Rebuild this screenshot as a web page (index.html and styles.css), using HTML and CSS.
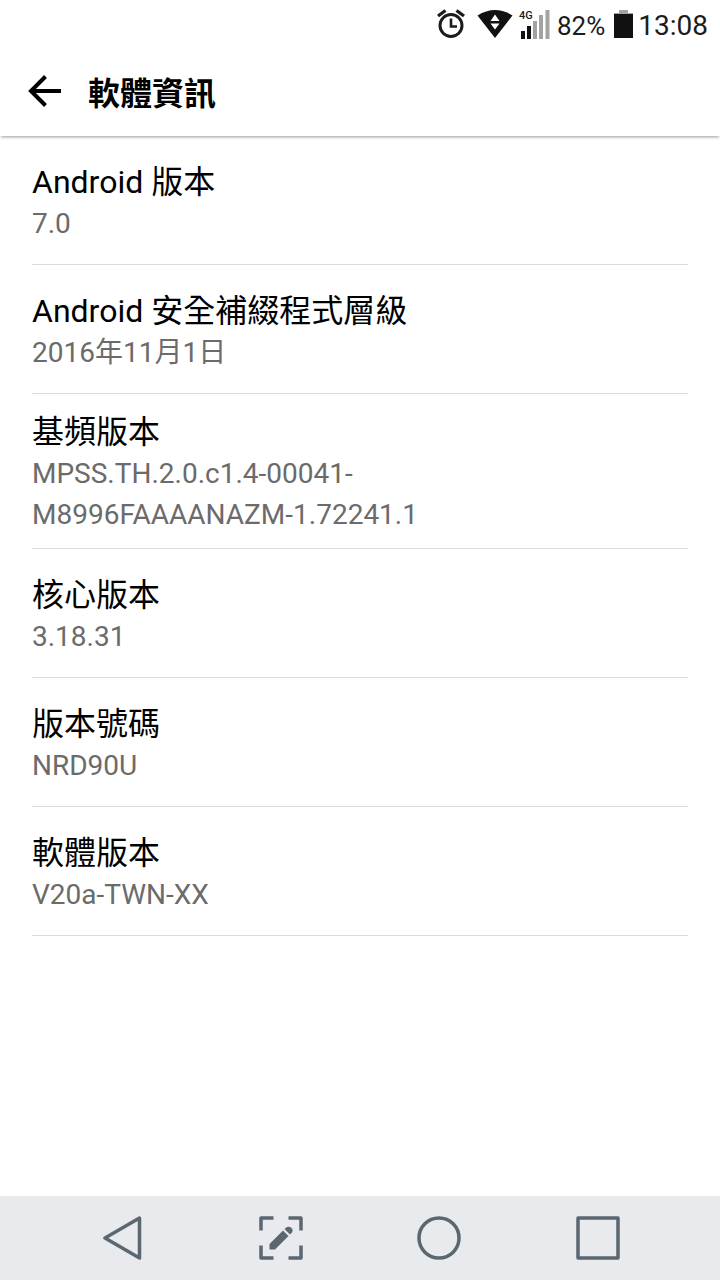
FILE: index.html
```html
<!DOCTYPE html>
<html lang="zh-Hant-TW">

<head>
    <meta charset="UTF-8">
    <meta name="viewport" content="width=device-width, initial-scale=1.0">
    <title>軟體資訊</title>
    <link rel="stylesheet" href="styles.css">
</head>

<body>
    <div class="status-bar">
        <svg class="alarm" width="28" height="30" viewBox="0 0 28 30" fill="none" stroke="#1c1c1c">
            <circle cx="14" cy="16.5" r="11" stroke-width="3" />
            <path d="M14 9.5V17.5H20" stroke-width="2.6" />
            <path d="M1 7L8.5 1.5M27 7L19.5 1.5" stroke-width="3.4" />
        </svg>
        <svg class="wifi" width="36" height="30" viewBox="0 0 36 30">
            <path d="M0.5 6.5Q18 -4.5 35.5 6.5L18 29Z" fill="#111" />
            <path d="M18 5.5L22.5 12H13.5ZM18 20.5L22.5 14.5H13.5Z" fill="#fff" />
        </svg>
        <div class="signal">
            <span class="network">4G</span>
            <svg width="29" height="29" viewBox="0 0 29 29">
                <path d="M0 21H4V29H0ZM6 16H10V29H6Z" fill="#111" />
                <path d="M12 11H16V29H12ZM18 5H22V29H18ZM24.5 0H28.5V29H24.5Z" fill="#a3a3a3" />
            </svg>
        </div>
        <span class="percent">82%</span>
        <svg class="battery" width="19" height="28" viewBox="0 0 19 28">
            <path d="M5 0H14V3H19V5H0V3H5Z" fill="#a3a3a3" />
            <path d="M0 4H19V28H0Z" fill="#111" />
        </svg>
        <span class="clock">13:08</span>
    </div>

    <header>
        <button class="back" aria-label="返回">
            <svg width="34" height="32" viewBox="0 0 34 32" fill="none" stroke="#000" stroke-width="4">
                <path d="M17.5 1.5L3 16L17.5 30.5M3 16H33" />
            </svg>
        </button>
        <h1>軟體資訊</h1>
    </header>

    <main>
        <dl>
            <div class="item">
                <dt>Android 版本</dt>
                <dd>7.0</dd>
            </div>
            <div class="item">
                <dt>Android 安全補綴程式層級</dt>
                <dd>2016年11月1日</dd>
            </div>
            <div class="item">
                <dt>基頻版本</dt>
                <dd>MPSS.TH.2.0.c1.4-00041-<br>M8996FAAAANAZM-1.72241.1</dd>
            </div>
            <div class="item">
                <dt>核心版本</dt>
                <dd>3.18.31</dd>
            </div>
            <div class="item">
                <dt>版本號碼</dt>
                <dd>NRD90U</dd>
            </div>
            <div class="item">
                <dt>軟體版本</dt>
                <dd>V20a-TWN-XX</dd>
            </div>
        </dl>
    </main>

    <nav>
        <button aria-label="上一頁">
            <svg width="44" height="44" viewBox="0 0 44 44" fill="none" stroke="#5b6770" stroke-width="3.5" stroke-linejoin="round">
                <path d="M39.5 2L5 22L39.5 42Z" />
            </svg>
        </button>
        <button aria-label="Capture+">
            <svg width="44" height="44" viewBox="0 0 44 44" fill="none" stroke="#5b6770" stroke-width="3.5" stroke-linejoin="round">
                <path d="M14.5 2H2V14.5M29.5 2H42V14.5M2 29.5V42H14.5M42 29.5V42H29.5" />
                <path d="M10.5 33.5V28L24 14.5L29.5 20L16 33.5ZM25.5 13L28 11Q30.5 10 32.5 12T33 16.5L31 18.5Z" fill="#5b6770" stroke="none" />
            </svg>
        </button>
        <button aria-label="主畫面">
            <svg width="44" height="44" viewBox="0 0 44 44" fill="none" stroke="#5b6770" stroke-width="3.5">
                <circle cx="22" cy="22" r="20" />
            </svg>
        </button>
        <button aria-label="最近使用">
            <svg width="44" height="44" viewBox="0 0 44 44" fill="none" stroke="#5b6770" stroke-width="3.5" stroke-linejoin="round">
                <rect x="2" y="2" width="40" height="40" />
            </svg>
        </button>
    </nav>
</body>

</html>
```
FILE: styles.css
```css
* {
    margin: 0;
    padding: 0;
    box-sizing: border-box;
}

body {
    display: flex;
    flex-direction: column;
    min-height: 100vh;
    background-color: #fff;
    color: #000;
    font-family: Roboto, "Noto Sans CJK TC", sans-serif;
}

svg {
    display: block;
}

button {
    display: flex;
    align-items: center;
    justify-content: center;
    border: none;
    background: none;
    cursor: pointer;
}

.status-bar {
    display: flex;
    align-items: center;
    justify-content: flex-end;
    height: 48px;
    padding-right: 12px;
    color: #1c1c1c;
}

.wifi {
    margin-left: 12px;
}

.signal {
    position: relative;
    margin: 0 7px 0 8px;
}

.network {
    position: absolute;
    top: 0;
    left: -2px;
    font-size: 11px;
    font-weight: 500;
    line-height: 12px;
}

.percent,
.clock {
    padding-top: 3px;
    line-height: 40px;
}

.percent {
    font-size: 26px;
}

.battery {
    margin: 0 5px 0 9px;
}

.clock {
    font-size: 28px;
}

header {
    display: flex;
    align-items: center;
    gap: 26px;
    height: 88px;
    padding: 0 28px 2px;
    box-shadow: 0 2px 3px -1px rgba(0, 0, 0, 0.4);
}

h1 {
    padding-top: 5px;
    font-size: 32px;
    font-weight: 700;
    line-height: 40px;
}

.back {
    height: 44px;
}

main {
    flex: 1;
    padding: 0 32px;
}

.item {
    display: flex;
    flex-direction: column;
    justify-content: center;
    min-height: 129px;
    padding: 18px 0 13px;
    border-bottom: 1px solid #dcdcdc;
}

dt {
    font-size: 32px;
    line-height: 41px;
}

dd {
    color: #6b6b6b;
    font-size: 28px;
    line-height: 41px;
}

nav {
    display: flex;
    height: 84px;
    padding: 0 43px;
    background-color: #e8eaee;
}

nav button {
    flex: 1;
}
```
